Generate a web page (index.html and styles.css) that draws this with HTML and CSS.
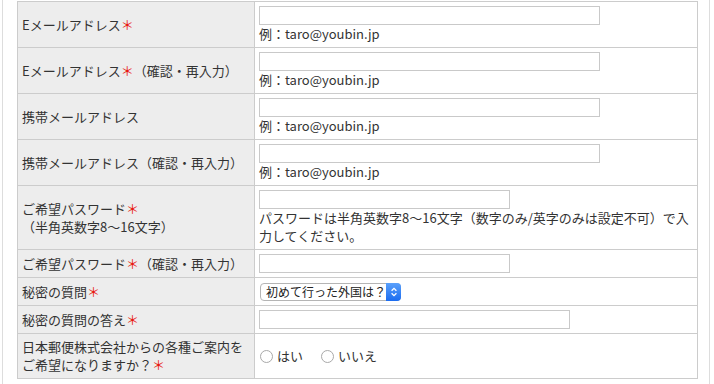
FILE: index.html
```html
<!DOCTYPE html>
<html lang="ja">
<head>
<meta charset="UTF-8">
<meta name="viewport" content="width=device-width, initial-scale=1.0">
<title>会員登録</title>
<link rel="stylesheet" href="styles.css">
</head>
<body>
<div class="page">
    <table class="form-table">
        <tr>
            <th>Eメールアドレス<span class="req">＊</span></th>
            <td>
                <input type="text" class="text-input wide">
                <div class="note">例：taro@youbin.jp</div>
            </td>
        </tr>
        <tr>
            <th>Eメールアドレス<span class="req">＊</span>（確認・再入力）</th>
            <td>
                <input type="text" class="text-input wide">
                <div class="note">例：taro@youbin.jp</div>
            </td>
        </tr>
        <tr>
            <th>携帯メールアドレス</th>
            <td>
                <input type="text" class="text-input wide">
                <div class="note">例：taro@youbin.jp</div>
            </td>
        </tr>
        <tr>
            <th>携帯メールアドレス（確認・再入力）</th>
            <td>
                <input type="text" class="text-input wide">
                <div class="note">例：taro@youbin.jp</div>
            </td>
        </tr>
        <tr>
            <th>ご希望パスワード<span class="req">＊</span><br>（半角英数字8〜16文字）</th>
            <td>
                <input type="password" class="text-input short">
                <div class="note">パスワードは半角英数字8〜16文字（数字のみ/英字のみは設定不可）で入力してください。</div>
            </td>
        </tr>
        <tr>
            <th>ご希望パスワード<span class="req">＊</span>（確認・再入力）</th>
            <td><input type="password" class="text-input short"></td>
        </tr>
        <tr>
            <th>秘密の質問<span class="req">＊</span></th>
            <td>
                <span class="select-wrap">
                    <select class="select-box">
                        <option>初めて行った外国は？</option>
                    </select>
                    <span class="select-arrow">
                        <svg viewBox="0 0 10 14" width="8" height="12">
                            <path d="M2 5.5 L5 2.5 L8 5.5 M2 8.5 L5 11.5 L8 8.5" fill="none" stroke="#fff" stroke-width="1.6"/>
                        </svg>
                    </span>
                </span>
            </td>
        </tr>
        <tr>
            <th>秘密の質問の答え<span class="req">＊</span></th>
            <td><input type="text" class="text-input medium"></td>
        </tr>
        <tr>
            <th>日本郵便株式会社からの各種ご案内を<br>ご希望になりますか？<span class="req">＊</span></th>
            <td>
                <div class="radio-group">
                    <label class="radio-item"><input type="radio" name="dm" class="radio">はい</label>
                    <label class="radio-item"><input type="radio" name="dm" class="radio">いいえ</label>
                </div>
            </td>
        </tr>
    </table>
</div>
</body>
</html>
```

FILE: styles.css
```css
* {
    box-sizing: border-box;
}

body {
    margin: 0;
    background-color: #fff;
    color: #333;
    font-family: "Noto Sans CJK JP", "Liberation Sans", sans-serif;
    font-size: 13px;
    line-height: 18px;
}

.page {
    margin: 0 4px 0 2px;
    min-height: 384px;
    padding: 1px 11px 6px 14px;
    border-left: 1px solid #ddd;
    border-right: 1px solid #ddd;
}

.form-table {
    width: 100%;
    border-collapse: collapse;
}

.form-table th,
.form-table td {
    border: 1px solid #ccc;
    padding: 4px;
    vertical-align: middle;
    text-align: left;
}

.form-table th {
    width: 237px;
    background-color: #ededed;
    font-weight: normal;
}

.req {
    color: #e8170f;
}

.text-input {
    display: block;
    height: 19px;
    margin: 0;
    padding: 0 3px;
    border: 1px solid #c9c9c9;
    background-color: #fff;
    font: inherit;
    outline: none;
}

.text-input.wide {
    width: 341px;
}

.text-input.short {
    width: 251px;
}

.text-input.medium {
    width: 311px;
}

.select-wrap {
    position: relative;
    display: inline-block;
    margin-left: 1px;
    vertical-align: middle;
}

.select-box {
    display: block;
    width: 141px;
    height: 18px;
    margin: 0;
    padding: 0 15px 0 5px;
    border: 1px solid #b5b5b5;
    border-radius: 4px;
    background-color: #fff;
    color: #222;
    font-family: inherit;
    font-size: 12px;
    line-height: 16px;
    -webkit-appearance: none;
    appearance: none;
    outline: none;
}

.select-arrow {
    position: absolute;
    top: 0;
    right: 0;
    width: 15px;
    height: 18px;
    border-radius: 0 4px 4px 0;
    background: linear-gradient(#5aa0fb, #1b6cf0);
    display: flex;
    align-items: center;
    justify-content: center;
}

.radio-group {
    display: flex;
    gap: 18px;
    margin-left: 1px;
}

.radio-item {
    display: flex;
    align-items: center;
    gap: 4px;
}

.radio {
    -webkit-appearance: none;
    appearance: none;
    width: 13px;
    height: 13px;
    margin: 0;
    border: 1px solid #a9a9a9;
    border-radius: 50%;
    background-color: #fff;
}
```
